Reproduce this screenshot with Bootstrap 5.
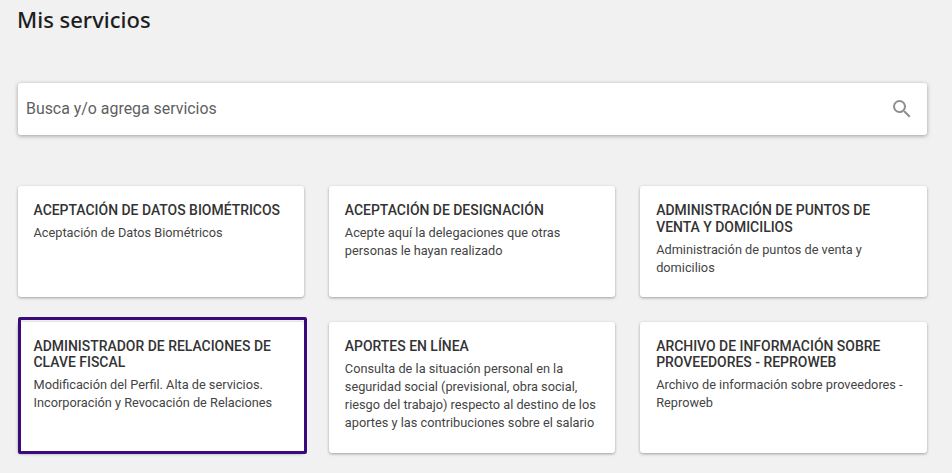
<!DOCTYPE html>
<html lang="es">
<head>
<meta charset="utf-8">
<title>Mis servicios</title>
<link href="https://cdn.jsdelivr.net/npm/bootstrap@5.3.0/dist/css/bootstrap.min.css" rel="stylesheet">
<style>
html,body{height:473px;overflow:hidden}
body{background:#f1f1f1;font-family:Roboto,"Liberation Sans",sans-serif;color:#333}
.page-wrap{padding:0 25.5px 0 17.5px}
.page-title{font-family:"Noto Sans",sans-serif;font-weight:500;font-size:22px;line-height:30px;color:#1e1e1e;margin:4px 0 49px -.5px}
.search-box{height:52px;background:#fff;border-radius:3px;box-shadow:0 1px 4px rgba(0,0,0,.35);padding:0 12.5px 0 8.5px;margin-bottom:51px}
.search-text{font-size:15.9px;color:#5f5f5f}
.svc-grid{display:grid;grid-template-columns:repeat(3,1fr);column-gap:25px;row-gap:25px;grid-template-rows:110.7px 131.3px}
.svc-card{background:#fff;border-radius:3px;box-shadow:0 1px 3px rgba(0,0,0,.35);padding:16px 16px 0;position:relative}
.svc-card.is-focus::after{content:"";position:absolute;left:0;right:-3px;top:-4.7px;bottom:-1px;border:3px solid #3a0a7c;border-radius:2px}
.svc-title{font-size:13.95px;font-weight:500;line-height:16.6px;color:#333;margin:0 0 5.4px;text-transform:uppercase}
.svc-desc{font-size:12.75px;line-height:18px;color:#444;margin:0}
</style>
</head>
<body>
<div class="page-wrap">
  <h1 class="page-title">Mis servicios</h1>
  <div class="search-box d-flex align-items-center justify-content-between">
    <span class="search-text">Busca y/o agrega servicios</span>
    <svg width="24" height="24" viewBox="0 0 24 24" fill="#8f8f8f" aria-hidden="true"><path d="M15.5 14h-.79l-.28-.27A6.47 6.47 0 0 0 16 9.5 6.5 6.5 0 1 0 9.5 16c1.61 0 3.09-.59 4.23-1.57l.27.28v.79l5 4.99L20.49 19l-4.99-5zm-6 0C7.01 14 5 11.99 5 9.5S7.01 5 9.5 5 14 7.01 14 9.5 11.99 14 9.5 14z"/></svg>
  </div>
  <div class="svc-grid">
    <div class="svc-card"><h2 class="svc-title">Aceptación de datos biométricos</h2><p class="svc-desc">Aceptación de Datos Biométricos</p></div>
    <div class="svc-card"><h2 class="svc-title">Aceptación de designación</h2><p class="svc-desc">Acepte aquí la delegaciones que otras personas le hayan realizado</p></div>
    <div class="svc-card"><h2 class="svc-title">Administración de puntos de venta y domicilios</h2><p class="svc-desc">Administración de puntos de venta y domicilios</p></div>
    <div class="svc-card is-focus"><h2 class="svc-title">Administrador de relaciones de clave fiscal</h2><p class="svc-desc">Modificación del Perfil. Alta de servicios. Incorporación y Revocación de Relaciones</p></div>
    <div class="svc-card"><h2 class="svc-title">Aportes en línea</h2><p class="svc-desc">Consulta de la situación personal en la seguridad social (previsional, obra social, riesgo del trabajo) respecto al destino de los aportes y las contribuciones sobre el salario</p></div>
    <div class="svc-card"><h2 class="svc-title">Archivo de información sobre proveedores - Reproweb</h2><p class="svc-desc">Archivo de información sobre proveedores - Reproweb</p></div>
  </div>
</div>
<script src="https://cdn.jsdelivr.net/npm/bootstrap@5.3.0/dist/js/bootstrap.bundle.min.js"></script>
</body>
</html>
